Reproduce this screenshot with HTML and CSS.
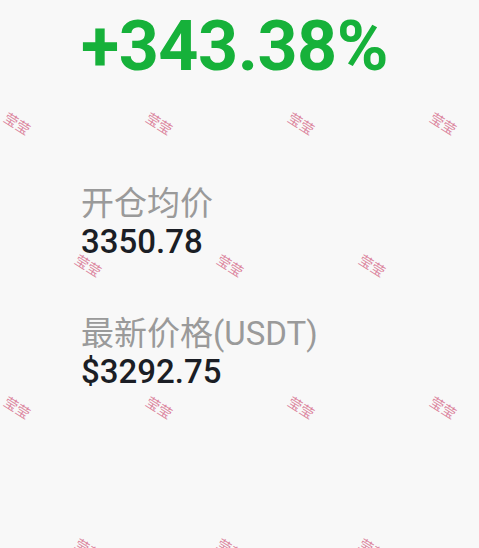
FILE: index.html
```html
<!DOCTYPE html>
<html lang="zh-CN">
<head>
  <meta charset="UTF-8" name="viewport" content="width=device-width, initial-scale=1.0" />
  <title>收益</title>
  <link rel="stylesheet" href="styles.css">
</head>
<body>
<div class="page">
  <div class="rate">+343.38%</div>
  <div class="item first">
    <div class="label">开仓均价</div>
    <div class="value">3350.78</div>
  </div>
  <div class="item">
    <div class="label">最新价格(USDT)</div>
    <div class="value">$3292.75</div>
  </div>
  <div class="mark">
    <div class="row"><span>莹莹</span><span>莹莹</span><span>莹莹</span><span>莹莹</span></div>
    <div class="row odd"><span>莹莹</span><span>莹莹</span><span>莹莹</span></div>
    <div class="row"><span>莹莹</span><span>莹莹</span><span>莹莹</span><span>莹莹</span></div>
    <div class="row odd"><span>莹莹</span><span>莹莹</span><span>莹莹</span></div>
  </div>
</div>
</body>
</html>
```

FILE: styles.css
```css
*{margin: 0;padding: 0;}
html,body{height: 100%;}
body{background: #f8f8f8;font-family: Roboto, "Noto Sans CJK SC", sans-serif;overflow: hidden;}
.page{position: relative;height: 100%;padding: 11px 0 0 81px;box-sizing: border-box;overflow: hidden;}
.rate{color: #16b13a;font-size: 70px;font-weight: bold;line-height: 70px;letter-spacing: -0.5px;}
.item .label{color: #9a9a9a;font-size: 33px;line-height: 38px;}
.item .value{color: #1b1e25;font-size: 33px;font-weight: 500;line-height: 38px;}
.item.first{margin-top: 104px;}
.item + .item{margin-top: 54px;}
.mark{position: absolute;top: 53px;left: -54px;right: 0;bottom: 0;overflow: hidden;pointer-events: none;}
.mark .row{display: flex;height: 142px;align-items: center;}
.mark .row.odd{padding-left: 71px;}
.mark span{flex: 0 0 142px;text-align: center;color: rgba(214, 110, 140, 0.85);font-size: 14px;line-height: 1;transform: rotate(32deg);}
```
